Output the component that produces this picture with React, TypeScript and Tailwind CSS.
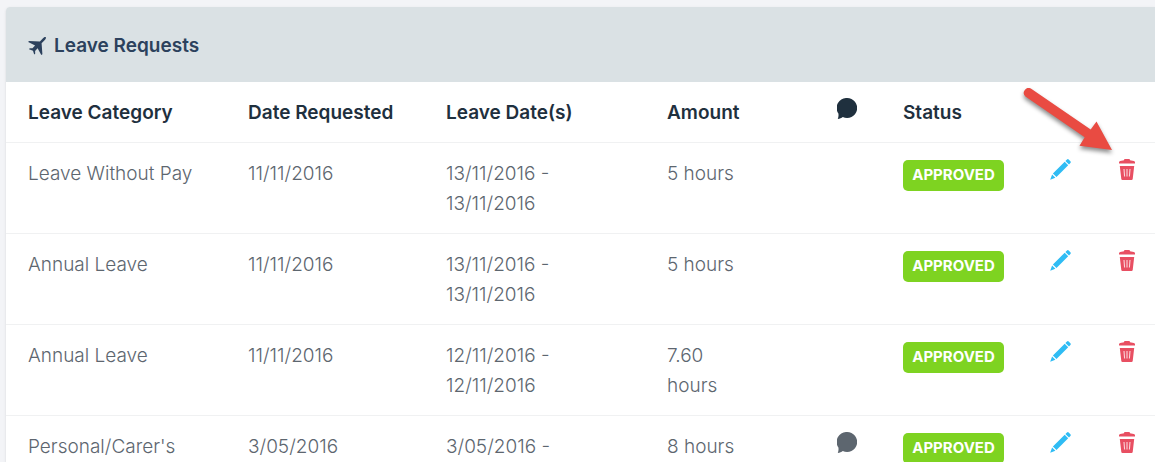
type IconProps = { className?: string };

const PlaneIcon = ({ className }: IconProps) => (
  <svg viewBox="0 0 18 18" fill="currentColor" className={className} aria-hidden="true">
    <path d="M17.800.2c.5.6-.1 1.900-1 2.800L13.600 6.200l.8 11-1.100.8-3.700-6.700-2.500 2.700.1 2.700-1 .8L5 13.700 1 12.200l.7-1 2.800.1 2.600-2.700L.2 5l.7-1.100 11 .7L15 1.300C16 .3 17.200-.3 17.800.2Z" />
  </svg>
);

const CommentIcon = ({ className }: IconProps) => (
  <svg viewBox="0 0 20 21" fill="currentColor" className={className} aria-hidden="true">
    <path d="M10.100 0a10 10 0 1 1-4.300 19C4.500 19.900 2.800 20.700.8 20.900c.7-1.600.9-3.300.6-5.300A10 10 0 0 1 10.100 0Z" />
  </svg>
);

const PencilIcon = ({ className }: IconProps) => (
  <svg viewBox="0 0 21 21" fill="currentColor" className={className} aria-hidden="true">
    <path d="M17 .5a1.200 1.200 0 0 1 1.700 0l1.700 1.700a1.200 1.200 0 0 1 0 1.700L19 5.400l-3.600-3.500ZM14.700 2.700l3.500 3.500L6.500 18l-3.600-3.600ZM2.100 15.500l3.300 3.300L.2 20.700Z" />
  </svg>
);

const TrashIcon = ({ className }: IconProps) => (
  <svg viewBox="0 0 16 21" className={className} aria-hidden="true">
    <path fill="currentColor" d="M5 1.200C5 .5 5.500 0 6.200 0h3.600C10.500 0 11 .5 11 1.200l3.800.8c.7.200 1.200.6 1.200 1.200V4.500H0V3.200C0 2.600.5 2.200 1.200 2ZM.8 7h14.400L13.700 20c-.1.600-.5 1-1.100 1H3.400c-.6 0-1-.4-1.100-1Z" />
    <path stroke="#fbd5da" strokeWidth="1.100" d="M5 10l.6 7.500M8 10v7.500M11 10l-.6 7.500" />
  </svg>
);

const PointerArrow = ({ className }: IconProps) => (
  <svg viewBox="0 0 100 80" className={className} aria-hidden="true">
    <path
      fill="#e94b42"
      d="M16.200 8.800 75.700 49.500 81.500 41.500 97 70 64.500 65.800 69.700 57.200 10.400 16.400A4.800 4.800 0 0 1 16.200 8.800Z"
    />
  </svg>
);

const rows = [
  { category: "Leave Without Pay", requested: "11/11/2016", dates: "13/11/2016 - 13/11/2016", amount: "5 hours", comment: false },
  { category: "Annual Leave", requested: "11/11/2016", dates: "13/11/2016 - 13/11/2016", amount: "5 hours", comment: false },
  { category: "Annual Leave", requested: "11/11/2016", dates: "12/11/2016 - 12/11/2016", amount: "7.60 hours", comment: false },
  { category: "Personal/Carer's", requested: "3/05/2016", dates: "3/05/2016 -", amount: "8 hours", comment: true },
];

export default function App() {
  return (
    <main className="h-screen overflow-hidden bg-[#f3f4f7] pt-[7px] pl-1.5 font-['Inter',sans-serif]">
      <section className="rounded-tl bg-white shadow-sm">
        <header className="flex h-[75px] items-center gap-2 rounded-tl bg-[#dae1e4] px-[22px] pt-0.5 text-[#2c415d]">
          <PlaneIcon className="size-[18px]" />
          <h1 className="text-[19px] leading-[30px] font-semibold">Leave Requests</h1>
        </header>
        <table className="w-full table-fixed text-left text-[19px] leading-[30px] text-[#5d666f]">
          <thead className="text-[#1f303e]">
            <tr className="h-[60px] align-middle">
              <th className="w-[220px] pt-0.5 pl-[22px] font-semibold">Leave Category</th>
              <th className="w-[198px] pt-0.5 pl-[22px] font-semibold">Date Requested</th>
              <th className="w-[221px] pt-0.5 pl-[22px] font-semibold">Leave Date(s)</th>
              <th className="w-[170px] pt-0.5 pl-[22px] font-semibold">Amount</th>
              <th className="w-[66px] pl-[22px]" aria-label="Comments">
                <CommentIcon className="mb-1.5 h-[21px] w-5" />
              </th>
              <th className="w-[147px] pt-0.5 pl-[22px] font-semibold">Status</th>
              <td className="w-[67px]" />
              <td className="relative w-[60px]">
                <PointerArrow className="pointer-events-none absolute -top-0.5 right-10 h-20 w-[100px] drop-shadow-[0px_3px_2px_rgba(0,0,0,0.45)]" />
              </td>
            </tr>
          </thead>
          <tbody className="font-light">
            {rows.map((row, i) => (
              <tr key={i} className="h-[91px] border-t border-[#f0f1f2] align-top">
                <td className="pt-4 pl-[22px]">{row.category}</td>
                <td className="pt-4 pl-[22px]">{row.requested}</td>
                <td className="pt-4 pr-16 pl-[22px]">{row.dates}</td>
                <td className="pt-4 pr-[60px] pl-[22px]">{row.amount}</td>
                <td className="pt-4 pl-[22px]">
                  {row.comment && <CommentIcon className="h-[21px] w-5" />}
                </td>
                <td className="pt-[17px] pl-[22px]">
                  <span className="flex h-[31px] w-[101px] items-center justify-center rounded-[5px] bg-[#7ed321] text-[15px] font-bold text-white">
                    APPROVED
                  </span>
                </td>
                <td className="pt-4 pl-[22px]">
                  <button type="button" aria-label="Edit" className="block text-[#2fbcf4]">
                    <PencilIcon className="size-[21px]" />
                  </button>
                </td>
                <td className="pt-4 pl-[24px]">
                  <button type="button" aria-label="Delete" className="block text-[#e84f62]">
                    <TrashIcon className="h-[21px] w-4" />
                  </button>
                </td>
              </tr>
            ))}
          </tbody>
        </table>
      </section>
    </main>
  );
}
